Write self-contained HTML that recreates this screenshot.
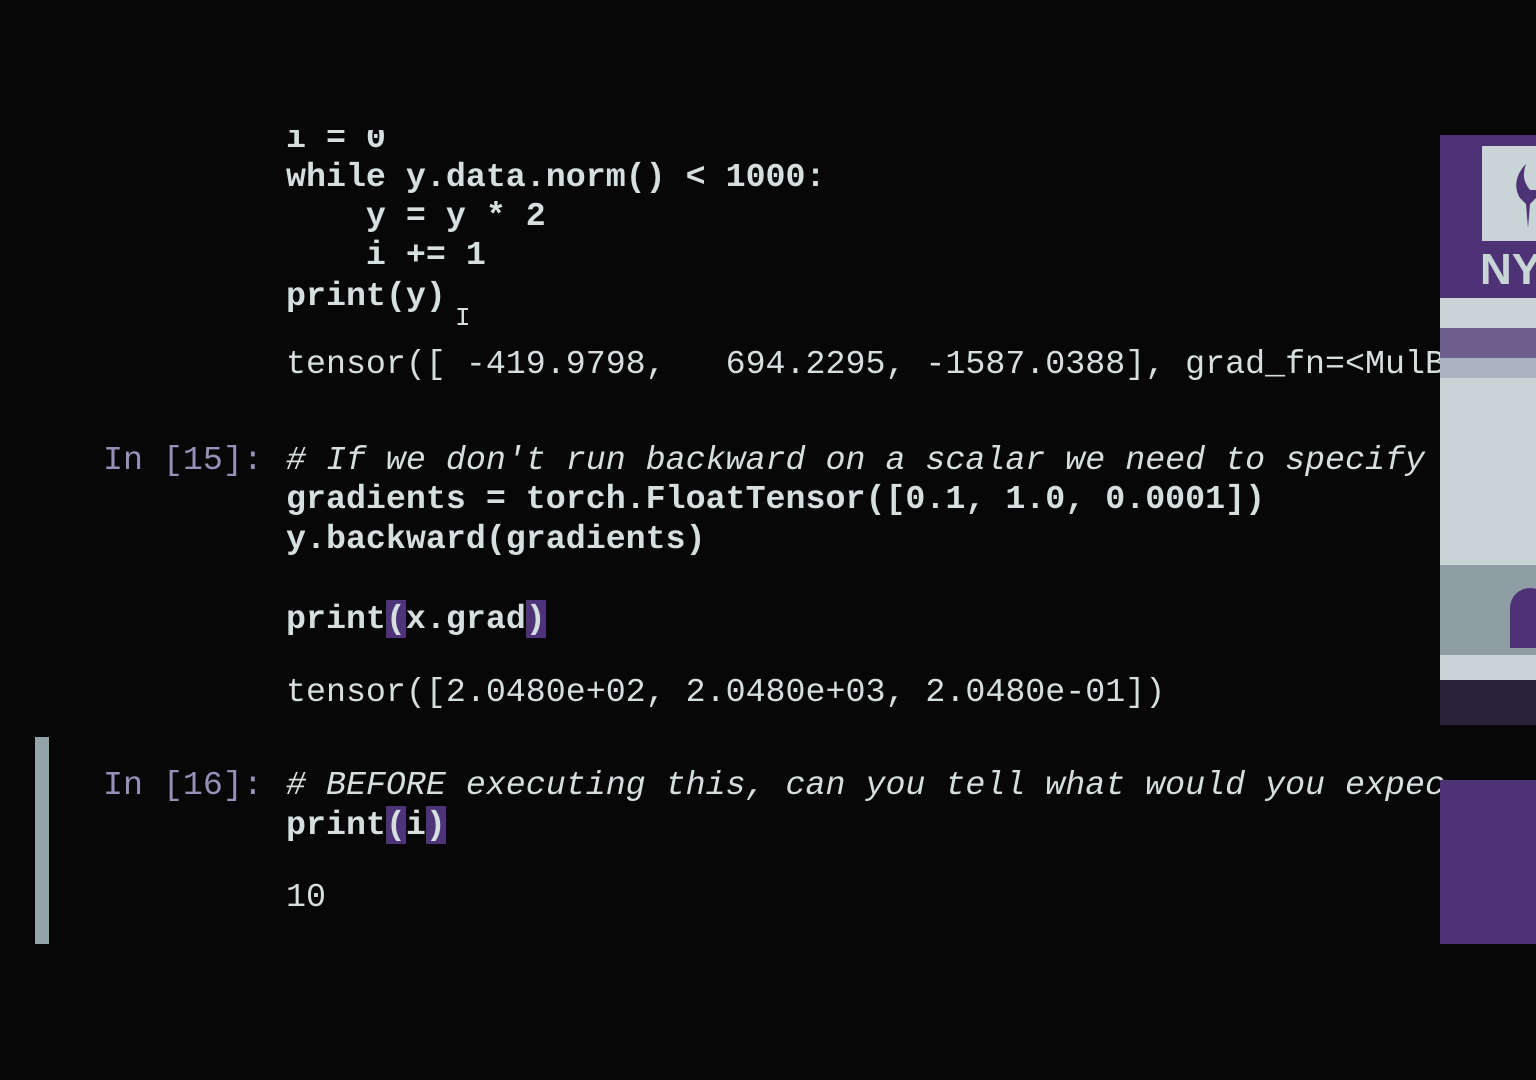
<!DOCTYPE html>
<html><head><meta charset="utf-8"><style>
html,body{margin:0;padding:0;background:#070707;width:1536px;height:1080px;overflow:hidden;position:relative}
.l{position:absolute;font-family:"Liberation Mono",monospace;font-size:33.3px;line-height:40px;height:40px;color:#d6dfe0;white-space:pre;font-weight:bold}
.o{font-weight:normal}
.c{font-style:italic;font-weight:normal}
.p{color:#9a8fb8;font-weight:normal}
.h{background:#4e3378}
.pan{position:absolute;left:1440px;width:96px}
</style></head><body>
<div style="position:absolute;left:286px;top:130px;width:200px;height:18px;overflow:hidden"><div class="l" style="left:0;top:-12px">i = 0</div></div>
<div class="l" style="left:286px;top:157px">while y.data.norm() &lt; 1000:</div>
<div class="l" style="left:286px;top:196px">    y = y * 2</div>
<div class="l" style="left:286px;top:235px">    i += 1</div>
<div class="l" style="left:286px;top:276px">print(y)</div>
<div class="l" style="left:455px;top:298px;font-size:26px;font-weight:normal">I</div>
<div class="l o" style="left:286px;top:344px">tensor([ -419.9798,   694.2295, -1587.0388], grad_fn=&lt;MulB</div>
<div class="l p" style="left:103px;top:440px">In [15]:</div>
<div class="l c" style="left:286px;top:440px"># If we don't run backward on a scalar we need to specify</div>
<div class="l" style="left:286px;top:479px">gradients = torch.FloatTensor([0.1, 1.0, 0.0001])</div>
<div class="l" style="left:286px;top:519px">y.backward(gradients)</div>
<div class="l" style="left:286px;top:599px">print<span class="h">(</span>x.grad<span class="h">)</span></div>
<div class="l o" style="left:286px;top:672px">tensor([2.0480e+02, 2.0480e+03, 2.0480e-01])</div>
<div class="l p" style="left:103px;top:765px">In [16]:</div>
<div class="l c" style="left:286px;top:765px"># BEFORE executing this, can you tell what would you expec</div>
<div class="l" style="left:286px;top:805px">print<span class="h">(</span>i<span class="h">)</span></div>
<div class="l o" style="left:286px;top:877px">10</div>
<div style="position:absolute;left:35px;top:737px;width:14px;height:207px;background:#94a3a8"></div>
<div class="pan" style="top:135px;height:590px;background:#c9d4d6"></div>
<div class="pan" style="top:135px;height:163px;background:#4d3376"></div>
<div class="pan" style="left:1482px;width:54px;top:146px;height:95px;background:#c9d4d6"></div>
<svg style="position:absolute;left:1510px;top:160px" width="26" height="70"><path d="M10 38 C2 25 8 12 16 4 C12 16 14 22 20 30 L26 30 L26 38 Z" fill="#4d3376"/><path d="M10 38 L26 38 L20 44 L18 68 L16 44 Z" fill="#4d3376"/></svg>
<div style="position:absolute;left:1480px;top:245px;font-family:'Liberation Sans',sans-serif;font-weight:bold;font-size:44px;line-height:50px;color:#c9d4d6">NYU</div>
<div class="pan" style="top:328px;height:30px;background:#6d5e8e"></div>
<div class="pan" style="top:358px;height:20px;background:#a9b4c0"></div>
<div class="pan" style="top:565px;height:90px;background:#8e9ea4"></div>
<div style="position:absolute;left:1510px;top:588px;width:40px;height:60px;border-radius:20px 20px 0 0;background:#4d3376"></div>
<div class="pan" style="top:655px;height:25px;background:#c9d4d6"></div>
<div class="pan" style="top:680px;height:45px;background:#2a2238"></div>
<div class="pan" style="top:780px;height:164px;background:#4d3376"></div>
</body></html>
